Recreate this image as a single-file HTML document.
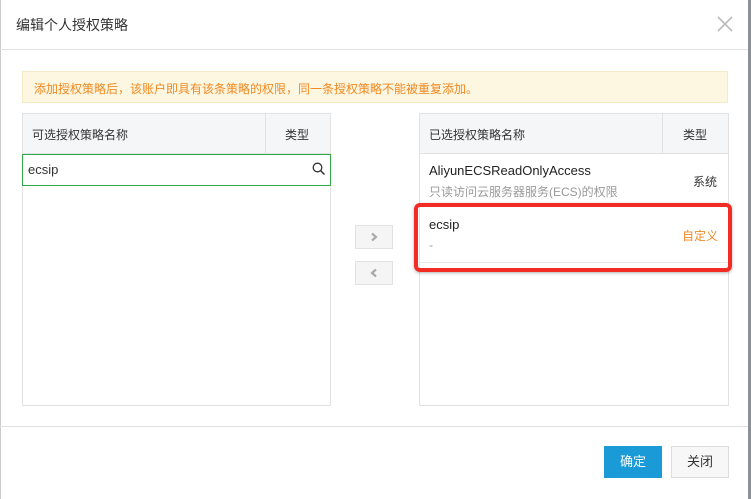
<!DOCTYPE html>
<html><head><meta charset="utf-8"><style>
body{margin:0;width:751px;height:499px;background:#fff;font-family:"Liberation Sans","Noto Sans CJK SC",sans-serif;position:relative;overflow:hidden;font-size:12px;color:#333}
.a{position:absolute;box-sizing:border-box}
</style></head><body>
<div class="a" style="left:748px;top:0;width:3px;height:499px;background:#8a9096"></div>
<div class="a" style="left:0;top:0;width:1px;height:499px;background:#ccc"></div>
<div class="a" style="left:16px;top:15px;font-size:14px;color:#333">编辑个人授权策略</div>
<svg class="a" style="left:717px;top:16px" width="16" height="16" viewBox="0 0 16 16"><path d="M1 1L15 15M15 1L1 15" stroke="#bbb" stroke-width="1.6"/></svg>
<div class="a" style="left:0;top:49px;width:748px;height:1px;background:#e2e2e2"></div>
<div class="a" style="left:22px;top:71px;width:706px;height:32px;background:#fdf6e0;border:1px solid #f6ebc7;color:#f08a24;padding:8px 0 0 11px">添加授权策略后，该账户即具有该条策略的权限，同一条授权策略不能被重复添加。</div>
<div class="a" style="left:22px;top:113px;width:309px;height:293px;border:1px solid #e2e2e2"></div>
<div class="a" style="left:22px;top:113px;width:309px;height:41px;background:#f5f6f8;border:1px solid #e2e2e2"></div>
<div class="a" style="left:265px;top:113px;width:1px;height:41px;background:#e2e2e2"></div>
<div class="a" style="left:32px;top:126px;color:#333">可选授权策略名称</div>
<div class="a" style="left:285px;top:126px">类型</div>
<div class="a" style="left:22px;top:154px;width:309px;height:32px;border:1px solid #33a847;padding:7px 0 0 5px;font-size:13px">ecsip</div>
<svg class="a" style="left:312px;top:162px" width="14" height="14" viewBox="0 0 14 14"><circle cx="5.5" cy="5.5" r="4.3" fill="none" stroke="#333" stroke-width="1.3"/><path d="M8.6 8.6L12.5 12.5" stroke="#333" stroke-width="1.5"/></svg>
<div class="a" style="left:355px;top:225px;width:38px;height:24px;background:#f5f5f5;border:1px solid #e2e2e2"></div>
<svg class="a" style="left:369px;top:232px" width="10" height="10" viewBox="0 0 10 10"><path d="M3 1.5L7 5L3 8.5" fill="none" stroke="#aaa" stroke-width="2.2"/></svg>
<div class="a" style="left:355px;top:261px;width:38px;height:24px;background:#f5f5f5;border:1px solid #e2e2e2"></div>
<svg class="a" style="left:369px;top:268px" width="10" height="10" viewBox="0 0 10 10"><path d="M7 1.5L3 5L7 8.5" fill="none" stroke="#aaa" stroke-width="2.2"/></svg>
<div class="a" style="left:419px;top:113px;width:310px;height:293px;border:1px solid #e2e2e2"></div>
<div class="a" style="left:419px;top:113px;width:310px;height:41px;background:#f5f6f8;border:1px solid #e2e2e2"></div>
<div class="a" style="left:662px;top:113px;width:1px;height:41px;background:#e2e2e2"></div>
<div class="a" style="left:429px;top:126px">已选授权策略名称</div>
<div class="a" style="left:683px;top:126px">类型</div>
<div class="a" style="left:429px;top:163px;font-size:13px;color:#222">AliyunECSReadOnlyAccess</div>
<div class="a" style="left:429px;top:183px;color:#999">只读访问云服务器服务(ECS)的权限</div>
<div class="a" style="left:693px;top:173px">系统</div>
<div class="a" style="left:420px;top:205px;width:308px;height:1px;background:#e8e8e8"></div>
<div class="a" style="left:429px;top:217px;font-size:13px;color:#222">ecsip</div>
<div class="a" style="left:429px;top:238px;color:#999">-</div>
<div class="a" style="left:682px;top:227px;color:#f08a24">自定义</div>
<div class="a" style="left:420px;top:262px;width:308px;height:1px;background:#e8e8e8"></div>
<div class="a" style="left:414px;top:203px;width:318px;height:69px;border:4px solid #f22c25;border-radius:6px;box-shadow:0 1px 3px rgba(0,0,0,.3)"></div>
<div class="a" style="left:0;top:426px;width:748px;height:1px;background:#e2e2e2"></div>
<div class="a" style="left:604px;top:446px;width:58px;height:32px;background:#1a9ad6;color:#fff;text-align:center;line-height:32px;font-size:13px">确定</div>
<div class="a" style="left:671px;top:446px;width:58px;height:32px;background:#f7f7f7;border:1px solid #ddd;color:#333;text-align:center;line-height:30px;font-size:13px">关闭</div>
</body></html>
